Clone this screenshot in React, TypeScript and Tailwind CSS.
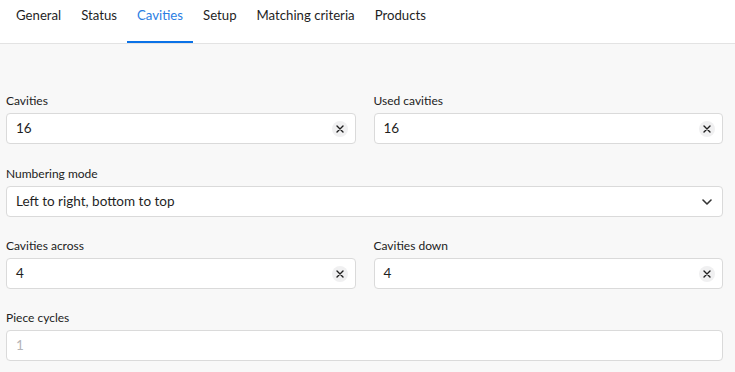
import React from 'react';

const tabs = ['General', 'Status', 'Cavities', 'Setup', 'Matching criteria', 'Products'];

const ClearButton: React.FC = () => (
  <span className="w-4 h-4 rounded-full bg-[#f0f0f1] flex items-center justify-center">
    <svg width="8" height="8" viewBox="0 0 8 8" fill="none">
      <path d="M1 1L7 7M7 1L1 7" stroke="#1f1f1f" strokeWidth="1.4" strokeLinecap="round" />
    </svg>
  </span>
);

const Field: React.FC<{ label: string; value: string; clearable?: boolean; muted?: boolean }> = ({
  label,
  value,
  clearable,
  muted,
}) => (
  <div className="flex flex-col">
    <label className="text-[12px] leading-[16px] text-[#222] mb-[4px]">{label}</label>
    <div className="h-[31px] bg-white border border-[#dadada] rounded-[4px] flex items-center pl-[9px] pr-[7px]">
      <span className={'flex-1 text-[13.5px] ' + (muted ? 'text-[#b4b4b8]' : 'text-[#1f1f1f]')}>{value}</span>
      {clearable && <ClearButton />}
    </div>
  </div>
);

export default function App() {
  return (
    <div className="w-[735px] h-[372px] bg-[#f8f8f8] font-['Lato',sans-serif] overflow-hidden">
      <div className="h-[44px] bg-white border-b border-[#e3e3e3] flex px-[6px]">
        {tabs.map(t => (
          <div
            key={t}
            className={
              t === 'Cavities'
                ? 'px-[10px] flex items-center text-[13.2px] text-[#2b7de3] border-b-2 border-[#0b72e7] pt-[2px]'
                : 'px-[10px] flex items-center text-[13.2px] text-[#1f1f1f]'
            }
          >
            <span className="-mt-[12px]">{t}</span>
          </div>
        ))}
      </div>

      <div className="pt-[49px] pl-[6px] pr-[12px] flex flex-col gap-[21px]">
        <div className="grid grid-cols-2 gap-x-[18px]">
          <Field label="Cavities" value="16" clearable />
          <Field label="Used cavities" value="16" clearable />
        </div>

        <div className="flex flex-col mt-[1px]">
          <label className="text-[12px] leading-[16px] text-[#222] mb-[4px]">Numbering mode</label>
          <div className="h-[31px] bg-white border border-[#dadada] rounded-[4px] flex items-center pl-[9px] pr-[10px]">
            <span className="flex-1 text-[13.5px] text-[#1f1f1f]">Left to right, bottom to top</span>
            <svg width="10" height="6" viewBox="0 0 10 6" fill="none">
              <path d="M1 1L5 5L9 1" stroke="#333" strokeWidth="1.6" strokeLinecap="round" strokeLinejoin="round" />
            </svg>
          </div>
        </div>

        <div className="grid grid-cols-2 gap-x-[18px]">
          <Field label="Cavities across" value="4" clearable />
          <Field label="Cavities down" value="4" clearable />
        </div>

        <Field label="Piece cycles" value="1" muted />
      </div>
    </div>
  );
}
